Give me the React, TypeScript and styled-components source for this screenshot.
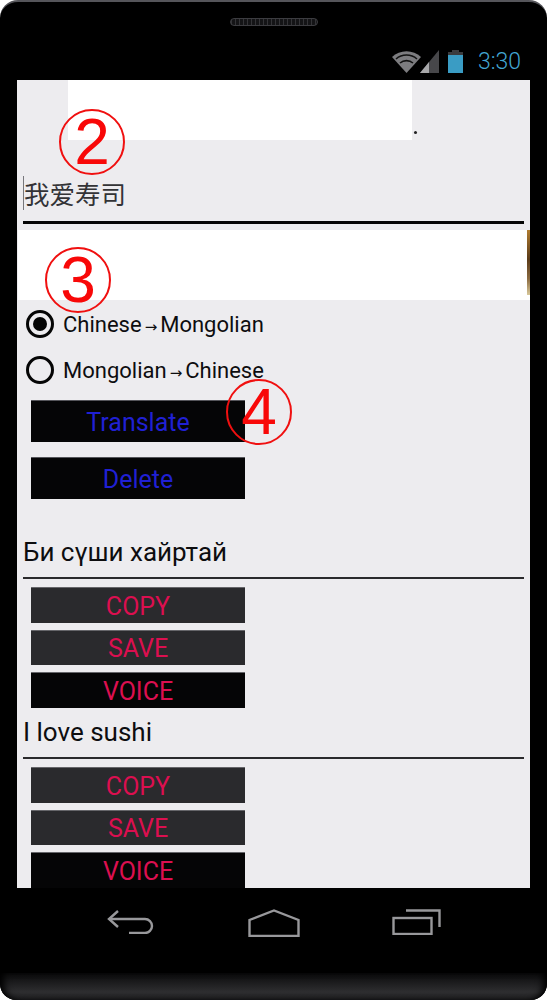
import React from "react";
import styled, { createGlobalStyle } from "styled-components";

const GlobalStyle = createGlobalStyle`
  html, body {
    margin: 0;
    padding: 0;
    background: #fff;
  }
  * {
    box-sizing: border-box;
  }
`;

const Phone = styled.div`
  position: relative;
  width: 547px;
  height: 1000px;
  display: flex;
  flex-direction: column;
  background: #000;
  border-top: 2px solid #55555a;
  border-radius: 18px 18px 16px 16px;
  overflow: hidden;
  font-family: Roboto, "Liberation Sans", sans-serif;
`;

const TopBezel = styled.div`
  height: 78px;
  display: flex;
  flex-direction: column;
  padding-top: 16px;
`;

const Speaker = styled.div`
  align-self: center;
  width: 88px;
  height: 8px;
  background: repeating-linear-gradient(90deg, #333336 0 1px, #141416 1px 4px);
  border: 1px solid #3c3c40;
  border-radius: 4px;
`;

const StatusBar = styled.div`
  display: flex;
  align-items: center;
  justify-content: flex-end;
  height: 26px;
  margin-top: 22px;
  padding-right: 26px;
`;

const Clock = styled.span`
  margin-left: 15px;
  color: #42a6d2;
  font-size: 23px;
  font-weight: 300;
`;

const Screen = styled.div`
  position: relative;
  height: 808px;
  margin: 0 17px;
  background: #edecef;
  overflow: hidden;
`;

const Banner = styled.div`
  display: flex;
  align-items: flex-end;
  height: 60px;
  padding-left: 51px;
`;

const BannerBlank = styled.div`
  width: 344px;
  height: 60px;
  background: #fff;
`;

const Dot = styled.span`
  width: 3px;
  height: 3px;
  margin: 0 0 6px 2px;
  background: #222;
  border-radius: 50%;
`;

const Input = styled.div`
  display: flex;
  align-items: flex-end;
  height: 84px;
  margin: 0 6px;
  padding-bottom: 11px;
  border-bottom: 3px solid #050505;
`;

const InputText = styled.span`
  display: block;
  padding: 2px 0;
  border-left: 1px solid #77777c;
  color: #333336;
  font-family: "Noto Sans CJK SC", sans-serif;
  font-size: 25.5px;
  line-height: 30px;
`;

const BlankStrip = styled.div`
  display: flex;
  justify-content: flex-end;
  height: 70px;
  margin: 6px 0 0 1px;
  background: #fff;
`;

const StripEdge = styled.div`
  width: 3px;
  height: 65px;
  background: linear-gradient(#b07c30, #5a3a18 45%, #8a6a40 75%, #d8c89a);
`;

const RadioGroup = styled.div`
  display: flex;
  flex-direction: column;
  padding-top: 1px;
`;

const RadioRow = styled.div`
  display: flex;
  align-items: center;
  height: 46px;
  padding-left: 9px;
  gap: 9px;
  color: #0d0d0f;
  font-size: 22px;
`;

const RadioMark = styled.span<{ $checked?: boolean }>`
  display: flex;
  align-items: center;
  justify-content: center;
  width: 28px;
  height: 28px;
  border: 3px solid #050505;
  border-radius: 50%;

  &::after {
    content: "";
    display: ${(p) => (p.$checked ? "block" : "none")};
    width: 14px;
    height: 14px;
    background: #050505;
    border-radius: 50%;
  }
`;

const Arrow = styled.span`
  font-family: "DejaVu Sans", sans-serif;
  font-size: 15px;
  margin: 0 3px;
`;

const Actions = styled.div`
  display: flex;
  flex-direction: column;
  align-items: flex-start;
  gap: 15px;
  margin-top: 7px;
  padding-left: 14px;
`;

const MainButton = styled.div`
  display: flex;
  align-items: center;
  justify-content: center;
  width: 214px;
  height: 42px;
  padding-top: 2px;
  background: #050506;
  border-top: 1px solid #55555a;
  color: #2020d4;
  font-size: 25px;
`;

const ResultText = styled.div<{ $top: number }>`
  height: ${(p) => p.$top}px;
  display: flex;
  align-items: flex-end;
  margin: 0 6px;
  padding-bottom: 10px;
  border-bottom: 2px solid #2a2a2c;
  color: #0d0d0f;
  font-size: 26px;
  line-height: 30px;
`;

const ResultActions = styled.div`
  display: flex;
  flex-direction: column;
  align-items: flex-start;
  gap: 7px;
  margin-top: 8px;
  padding-left: 14px;
`;

const SmallButton = styled.div<{ $dark?: boolean }>`
  display: flex;
  align-items: center;
  justify-content: center;
  flex: none;
  width: 214px;
  height: 35.5px;
  padding-top: 2px;
  background: ${(p) => (p.$dark ? "#050506" : "#2a2a2d")};
  border-top: 1px solid #66666a;
  color: #dc0f50;
  font-size: 25px;
`;

const Annotation = styled.div<{ $x: number; $y: number }>`
  position: absolute;
  left: ${(p) => p.$x}px;
  top: ${(p) => p.$y}px;
  display: flex;
  align-items: center;
  justify-content: center;
  width: 66px;
  height: 66px;
  border: 2px solid #f01010;
  border-radius: 50%;
  color: #f80808;
  font-family: "Liberation Sans", sans-serif;
  font-size: 64px;
  line-height: 1;
`;

const NavBar = styled.div`
  display: grid;
  grid-template-columns: repeat(3, 143px);
  justify-content: center;
  justify-items: center;
  height: 85px;
  padding-top: 21px;
`;

const Chin = styled.div`
  flex: 1;
  background: linear-gradient(#0a0a0b, #2e2e30 70%, #1f1f21);
  box-shadow: inset 7px 0 7px -3px #000, inset -7px 0 7px -3px #000;
  border-radius: 0 0 16px 16px;
`;

const NAV_STROKE = "#98989b";

const App: React.FC = () => {
  return (
    <>
      <GlobalStyle />
      <Phone>
        <TopBezel>
          <Speaker />
          <StatusBar>
            <svg width="29" height="23" viewBox="0 0 29 23">
              <path d="M0 7 A21 21 0 0 1 29 7 L14.5 23 Z" fill="#7c7c7f" />
              <path d="M4 9 A16 16 0 0 1 25 9" stroke="#111" strokeWidth="1.6" fill="none" />
              <path d="M8 13 A10 10 0 0 1 21 13" stroke="#111" strokeWidth="1.6" fill="none" />
            </svg>
            <svg width="20" height="23" viewBox="0 0 20 23" style={{ marginLeft: -1 }}>
              <path d="M0 23 L19 0 V23 Z" fill="#47474a" />
              <path d="M0 23 L9 12 V23 Z" fill="#a8a8aa" />
            </svg>
            <svg width="15" height="23" viewBox="0 0 15 23" style={{ marginLeft: 8 }}>
              <rect x="4" y="0" width="7" height="3" fill="#3b3b3e" />
              <rect x="0" y="2" width="15" height="4" fill="#3b3b3e" />
              <rect x="0" y="5" width="15" height="18" fill="#3a9cc4" />
            </svg>
            <Clock>3:30</Clock>
          </StatusBar>
        </TopBezel>
        <Screen>
          <Banner>
            <BannerBlank />
            <Dot />
          </Banner>
          <Input>
            <InputText>我爱寿司</InputText>
          </Input>
          <BlankStrip>
            <StripEdge />
          </BlankStrip>
          <RadioGroup>
            <RadioRow>
              <RadioMark $checked />
              <span>
                Chinese<Arrow>→</Arrow>Mongolian
              </span>
            </RadioRow>
            <RadioRow>
              <RadioMark />
              <span>
                Mongolian<Arrow>→</Arrow>Chinese
              </span>
            </RadioRow>
          </RadioGroup>
          <Actions>
            <MainButton>Translate</MainButton>
            <MainButton>Delete</MainButton>
          </Actions>
          <ResultText $top={80}>Би сүши хайртай</ResultText>
          <ResultActions>
            <SmallButton>COPY</SmallButton>
            <SmallButton>SAVE</SmallButton>
            <SmallButton $dark>VOICE</SmallButton>
          </ResultActions>
          <ResultText $top={51.5}>I love sushi</ResultText>
          <ResultActions>
            <SmallButton>COPY</SmallButton>
            <SmallButton>SAVE</SmallButton>
            <SmallButton $dark>VOICE</SmallButton>
          </ResultActions>
          <Annotation $x={42} $y={29}>2</Annotation>
          <Annotation $x={28} $y={167}>3</Annotation>
          <Annotation $x={209} $y={299}>4</Annotation>
        </Screen>
        <NavBar>
          <svg width="47" height="25" viewBox="0 0 47 25" fill="none" stroke={NAV_STROKE} strokeWidth="2.4">
            <path d="M11 2 L2 10 L11 18" />
            <path d="M2 10 H38 A7 7 0 0 1 38 24 H22" />
          </svg>
          <svg width="52" height="28" viewBox="0 0 52 28" fill="none" stroke={NAV_STROKE} strokeWidth="2.4">
            <path d="M1.5 27 V11 L26 1.5 L50.5 11 V27 Z" />
          </svg>
          <svg width="49" height="26" viewBox="0 0 49 26" fill="none" stroke={NAV_STROKE} strokeWidth="2.4">
            <rect x="1.5" y="9" width="38" height="16" />
            <path d="M14 1.5 H47.5 V18" />
          </svg>
        </NavBar>
        <Chin />
      </Phone>
    </>
  );
};

export default App;
